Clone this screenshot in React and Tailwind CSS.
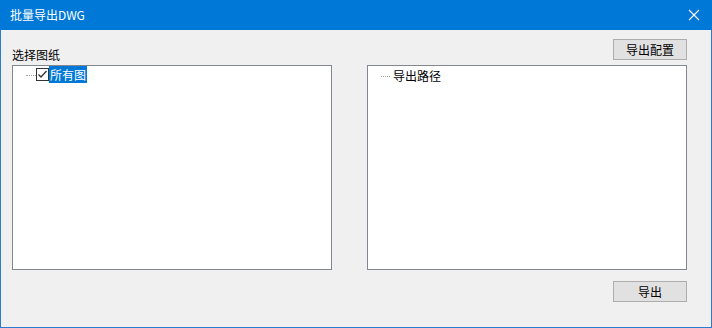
import React from "react";

const font = { fontFamily: '"Microsoft YaHei", "Noto Sans CJK SC", sans-serif' };

const Dots = ({ w = 10 }) => (
  <span
    className="mt-[1px] border-t border-dotted border-[#a0a0a0]"
    style={{ width: w }}
  />
);

const App = () => {
  return (
    <div
      className="w-[712px] h-[328px] flex flex-col bg-[#f0f0f0] border border-t-0 border-[#2b7bd0] text-[12px] leading-[16px] text-black"
      style={font}
    >
      {/* Title bar */}
      <div className="h-[30px] -mx-[1px] bg-[#0078d7] flex items-center justify-between pl-[10px] pr-[10px] text-white">
        <span className="text-[12px]">批量导出DWG</span>
        <svg width="12" height="12" viewBox="0 0 12 12" className="mr-[2px]">
          <path d="M1 1 L11 11 M11 1 L1 11" stroke="#fff" strokeWidth="1.1" />
        </svg>
      </div>

      <div className="flex-1 flex flex-col pl-[11px] pr-[24px] pt-[9px]">
        {/* top row */}
        <div className="flex items-end justify-between h-[26px]">
          <span className="mb-[2px]">选择图纸</span>
          <button className="self-start w-[74px] h-[21px] bg-[#e1e1e1] border border-[#adadad] flex items-center justify-center">
            导出配置
          </button>
        </div>

        {/* panels */}
        <div className="flex gap-[35px]">
          <div className="w-[320px] h-[205px] bg-white border border-[#828790]">
            <div className="flex items-center h-[17px] pl-[13px]">
              <Dots w={10} />
              <span className="w-[13px] h-[13px] border border-[#333] flex items-center justify-center bg-white">
                <svg width="11" height="11" viewBox="0 0 11 11">
                  <path d="M1.5 5.5 L4 8 L9.5 2" fill="none" stroke="#333" strokeWidth="1.3" />
                </svg>
              </span>
              <span className="ml-[0px] px-[1px] h-[17px] bg-[#0078d7] text-white flex items-center">
                所有图
              </span>
            </div>
          </div>
          <div className="w-[320px] h-[205px] bg-white border border-[#828790]">
            <div className="flex items-center h-[17px] pl-[13px] mt-[1px]">
              <Dots w={9} />
              <span className="ml-[3px]">导出路径</span>
            </div>
          </div>
        </div>

        {/* bottom row */}
        <div className="flex justify-end pt-[11px]">
          <button className="w-[74px] h-[21px] bg-[#e1e1e1] border border-[#adadad] flex items-center justify-center">
            导出
          </button>
        </div>
      </div>
    </div>
  );
};

export default App;
